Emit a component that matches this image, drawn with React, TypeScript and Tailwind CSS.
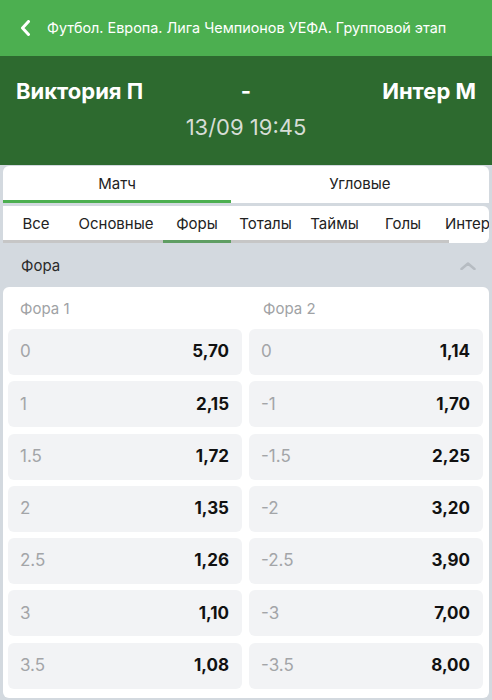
import { FC } from "react"

const rows = [
  ["0", "5,70", "0", "1,14"],
  ["1", "2,15", "-1", "1,70"],
  ["1.5", "1,72", "-1.5", "2,25"],
  ["2", "1,35", "-2", "3,20"],
  ["2.5", "1,26", "-2.5", "3,90"],
  ["3", "1,10", "-3", "7,00"],
  ["3.5", "1,08", "-3.5", "8,00"],
]

const subTabs = [
  { name: "Все", w: "w-[66px]" },
  { name: "Основные", w: "w-[94px]" },
  { name: "Форы", w: "w-[68px]", active: true },
  { name: "Тоталы", w: "w-[69px]" },
  { name: "Таймы", w: "w-[69px]" },
  { name: "Голы", w: "w-[80px] pr-[12px]" },
]

const Cell: FC<{ label: string; value: string }> = ({ label, value }) => (
  <div className="h-[46px] rounded-md bg-[#f2f3f5] flex items-center justify-between pl-3 pr-[13px]">
    <span className="text-[17px] text-[#a3a5a8]">{label}</span>
    <span className="text-[17px] font-bold text-[#111]">{value}</span>
  </div>
)

const App: FC = () => {
  return (
    <div className="w-[492px] h-[700px] overflow-hidden bg-[#d3d9df] font-['Inter','Liberation_Sans',sans-serif]">
      <div className="h-[56px] bg-[#4caf50] flex items-center pl-[20px] gap-[16px] text-white">
        <svg width="11" height="16" viewBox="0 0 11 16">
          <path d="M8.5 1.5 L2.5 8 L8.5 14.5" stroke="white" strokeWidth="3" fill="none" strokeLinecap="round" strokeLinejoin="round" />
        </svg>
        <span className="text-[14.4px]">Футбол. Европа. Лига Чемпионов УЕФА. Групповой этап</span>
      </div>

      <div className="h-[109px] bg-[#2d6a2f] px-[16px] pt-[20px]">
        <div className="flex items-center justify-between text-white text-[22px] font-bold leading-[30px]">
          <span className="w-[160px]">Виктория П</span>
          <span>-</span>
          <span className="w-[160px] text-right">Интер М</span>
        </div>
        <div className="text-center text-[22px] text-[#d6ddd6] leading-[30px] mt-[6px]">13/09 19:45</div>
      </div>

      <div className="px-[3px]">
        <div className="mt-[1px] h-[37px] bg-white rounded-t-md flex text-[15px] text-[#222]">
          <div className="w-[228px] flex flex-col">
            <div className="flex-1 flex items-center justify-center pt-[3px]">Матч</div>
            <div className="h-[3px] bg-[#4caf50]" />
          </div>
          <div className="flex-1 flex items-center justify-center">Угловые</div>
        </div>

        <div className="mt-[3px] h-[37px] bg-white rounded-r-md flex overflow-hidden text-[15px] text-[#222]">
          {subTabs.map((t) => (
            <div
              key={t.name}
              className={`${t.w} shrink-0 flex items-center justify-center pt-[3px] border-b-[3px] ${t.active ? "border-[#5f9e63]" : "border-[#c6c6c6]"}`}
            >
              {t.name}
            </div>
          ))}
          <div className="shrink-0 flex items-center pb-[1px] -ml-[4px]">Интер</div>
        </div>
      </div>

      <div className="h-[44px] flex items-center justify-between pl-[21px] pr-[16px] pt-[2px]">
        <span className="text-[15px] text-[#2a2a2a]">Фора</span>
        <svg width="16" height="8" viewBox="0 0 16 8">
          <path d="M1.5 7 L8 1.5 L14.5 7" stroke="#b6bcc2" strokeWidth="2.5" fill="none" strokeLinecap="round" strokeLinejoin="round" />
        </svg>
      </div>

      <div className="mx-[3px] bg-white rounded-md pl-[5px] pr-[6px] pb-[9px]">
        <div className="h-[42px] grid grid-cols-2 gap-x-[7px] items-center text-[15px] text-[#a0a2a5]">
          <span className="pl-3 pt-[2px]">Фора 1</span>
          <span className="pl-[14px] pt-[2px]">Фора 2</span>
        </div>
        <div className="grid grid-cols-2 gap-x-[7px] gap-y-[6.3px]">
          {rows.map((r) => (
            <>
              <Cell key={r[0] + "a"} label={r[0]} value={r[1]} />
              <Cell key={r[0] + "b"} label={r[2]} value={r[3]} />
            </>
          ))}
        </div>
      </div>
    </div>
  )
}

export default App
